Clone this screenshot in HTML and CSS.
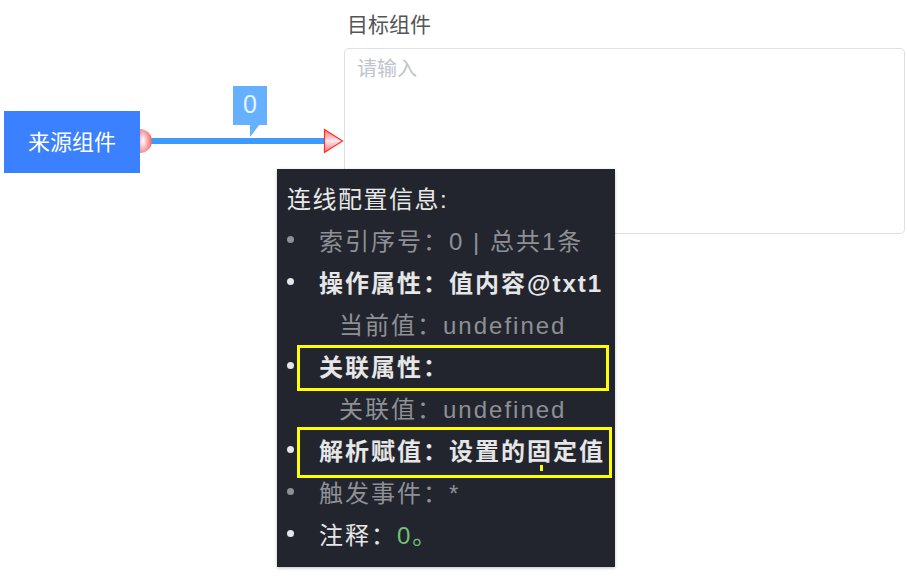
FILE: index.html
```html
<!DOCTYPE html>
<html lang="zh-CN">
<head>
<meta charset="utf-8">
<title>连线配置</title>
<link rel="stylesheet" href="styles.css">
</head>
<body>
<div class="canvas">
  <div class="node source">来源组件</div>

  <svg class="edge" width="220" height="80" viewBox="0 0 220 80">
    <defs>
      <radialGradient id="dotg" cx="0.25" cy="0.5" r="0.9">
        <stop offset="0" stop-color="#ffffff"/>
        <stop offset="0.45" stop-color="#f7a3a3"/>
        <stop offset="1" stop-color="#ec4b4b"/>
      </radialGradient>
      <linearGradient id="arrg" x1="0" y1="0" x2="0" y2="1">
        <stop offset="0" stop-color="#ff6b6b"/>
        <stop offset="0.5" stop-color="#fbe9ee"/>
        <stop offset="1" stop-color="#ff6b6b"/>
      </linearGradient>
    </defs>
    <rect x="10" y="58" width="186" height="6" fill="#3d9bff"/>
    <path d="M10 49 A12 12 0 0 1 10 73 Z" fill="url(#dotg)"/>
    <path d="M194.5 49.5 L212.5 61 L194.5 72.5 Z" fill="url(#arrg)" stroke="#ff2d2d" stroke-width="1.2"/>
    <rect x="103" y="6" width="34" height="39" fill="#66b1ff"/>
    <path d="M120 44 L130 44 L120 57 Z" fill="#66b1ff"/>
    <text x="120" y="33" text-anchor="middle" class="edge-label">0</text>
  </svg>

  <div class="node target">
    <div class="target-label">目标组件</div>
    <div class="textarea">请输入</div>
  </div>

  <div class="tooltip">
    <div class="row title">连线配置信息:</div>
    <div class="row muted"><span class="bullet"></span>索引序号：0 | 总共1条</div>
    <div class="row strong"><span class="bullet"></span>操作属性：值内容@txt1</div>
    <div class="row muted sub">当前值：undefined</div>
    <div class="row strong"><span class="bullet"></span>关联属性：</div>
    <div class="row muted sub">关联值：undefined</div>
    <div class="row strong"><span class="bullet"></span>解析赋值：设置的固定值</div>
    <div class="row muted"><span class="bullet"></span>触发事件：*</div>
    <div class="row plain"><span class="bullet"></span>注释：<span class="green">0。</span></div>

    <div class="mark mark-1"></div>
    <div class="mark mark-2"></div>
    <div class="mark-tick"></div>
  </div>
</div>
</body>
</html>
```

FILE: styles.css
```css
html, body {
  margin: 0;
  padding: 0;
  background: #ffffff;
}

body {
  font-family: "Liberation Sans", "Noto Sans CJK SC", sans-serif;
}

.canvas {
  position: relative;
  width: 907px;
  height: 578px;
  overflow: hidden;
}

.node {
  position: absolute;
}

.source {
  left: 4px;
  top: 111px;
  width: 136px;
  height: 62px;
  box-sizing: border-box;
  padding-bottom: 5px;
  background: #3a80ff;
  color: #ffffff;
  font-family: "Noto Sans CJK SC", sans-serif;
  font-size: 22px;
  line-height: 1;
  display: flex;
  align-items: center;
  justify-content: center;
}

.edge {
  position: absolute;
  left: 130px;
  top: 80px;
  overflow: visible;
}

.edge-label {
  font-family: "Liberation Sans", sans-serif;
  font-size: 25px;
  fill: #e8f3ff;
}

.target {
  left: 344px;
  top: 10px;
  width: 561px;
}

.target-label {
  font-size: 21px;
  color: #555555;
  line-height: 30px;
  padding-left: 3px;
}

.textarea {
  margin-top: 8px;
  box-sizing: border-box;
  height: 186px;
  border: 1px solid #dcdfe6;
  border-radius: 5px;
  padding: 8px 12px;
  font-size: 20px;
  line-height: 24px;
  color: #c0c4cc;
}

.tooltip {
  position: absolute;
  left: 277px;
  top: 169px;
  width: 338px;
  height: 398px;
  box-sizing: border-box;
  padding: 7px 0 0 10px;
  background: #22252d;
  box-shadow: 0 1px 3px rgba(0, 0, 0, 0.25);
  font-size: 24px;
  letter-spacing: 2px;
}

.row {
  display: flex;
  align-items: center;
  height: 42px;
  white-space: nowrap;
}

.title {
  color: #e8e8e8;
  letter-spacing: 1.5px;
}

.muted {
  color: #8e9096;
}

.strong {
  color: #e6e6e6;
  font-weight: bold;
}

.plain {
  color: #e6e6e6;
}

.sub {
  padding-left: 52px;
}

.bullet {
  width: 32px;
  height: 42px;
  flex: none;
  display: flex;
  align-items: center;
}

.bullet::before {
  content: "";
  width: 7px;
  height: 7px;
  border-radius: 50%;
  background: currentColor;
}

.green {
  color: #72c172;
}

.mark {
  position: absolute;
  box-sizing: border-box;
  border: 3px solid #ffff00;
}

.mark-1 {
  left: 20px;
  top: 176px;
  width: 312px;
  height: 46px;
}

.mark-2 {
  left: 20px;
  top: 258px;
  width: 315px;
  height: 51px;
}

.mark-tick {
  position: absolute;
  left: 263px;
  top: 296px;
  width: 3px;
  height: 6px;
  background: #ffff00;
}
```
